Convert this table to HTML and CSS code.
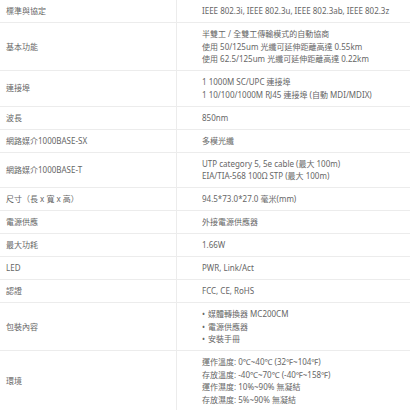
FILE: index.html
```html
<!DOCTYPE html>
<html lang="zh-Hant">
<head>
<meta charset="utf-8">
<link rel="stylesheet" href="styles.css">
</head>
<body>
<div class="spec">
  <div class="row"><div class="k">標準與協定</div><div class="v">IEEE 802.3i, IEEE 802.3u, IEEE 802.3ab, IEEE 802.3z</div></div>
  <div class="row"><div class="k">基本功能</div><div class="v">半雙工 / 全雙工傳輸模式的自動協商<br>使用 50/125um 光纖可延伸距離高達 0.55km<br>使用 62.5/125um 光纖可延伸距離高達 0.22km</div></div>
  <div class="row"><div class="k">連接埠</div><div class="v">1 1000M SC/UPC 連接埠<br>1 10/100/1000M RJ45 連接埠 (自動 MDI/MDIX)</div></div>
  <div class="row"><div class="k">波長</div><div class="v">850nm</div></div>
  <div class="row"><div class="k">網路媒介1000BASE-SX</div><div class="v">多模光纖</div></div>
  <div class="row"><div class="k">網路媒介1000BASE-T</div><div class="v">UTP category 5, 5e cable (最大 100m)<br>EIA/TIA-568 100Ω STP (最大 100m)</div></div>
  <div class="row"><div class="k">尺寸（長 x 寬 x 高）</div><div class="v">94.5*73.0*27.0 毫米(mm)</div></div>
  <div class="row"><div class="k">電源供應</div><div class="v">外接電源供應器</div></div>
  <div class="row"><div class="k">最大功耗</div><div class="v">1.66W</div></div>
  <div class="row"><div class="k">LED</div><div class="v">PWR, Link/Act</div></div>
  <div class="row"><div class="k">認證</div><div class="v">FCC, CE, RoHS</div></div>
  <div class="row"><div class="k">包裝內容</div><div class="v"><ul class="list"><li>媒體轉換器 MC200CM</li><li>電源供應器</li><li>安裝手冊</li></ul></div></div>
  <div class="row"><div class="k">環境</div><div class="v">運作溫度: 0℃~40℃ (32℉~104℉)<br>存放溫度: -40℃~70℃ (-40℉~158℉)<br>運作濕度: 10%~90% 無凝結<br>存放濕度: 5%~90% 無凝結</div></div>
</div>
</body>
</html>
```
FILE: styles.css
```css
html, body {
  margin: 0;
  padding: 0;
  background: #ffffff;
}
body {
  font-family: "Noto Sans", "Noto Sans CJK TC", sans-serif;
  font-size: 8px;
  line-height: 12.5px;
  color: #666666;
  width: 410px;
  overflow: hidden;
}
.spec {
  display: flex;
  flex-direction: column;
}
.row {
  display: grid;
  grid-template-columns: 177px 1fr;
  border-bottom: 1px solid #ececec;
}
.k {
  display: flex;
  align-items: center;
  padding: 5px 6px 4.5px 6px;
  border-right: 1px solid #ececec;
}
.v {
  padding: 5px 6px 4.5px 25px;
}
.list {
  list-style: none;
  margin: 0;
  padding: 0;
}
.list li::before {
  content: "•";
  display: inline-block;
  width: 6px;
}
```
